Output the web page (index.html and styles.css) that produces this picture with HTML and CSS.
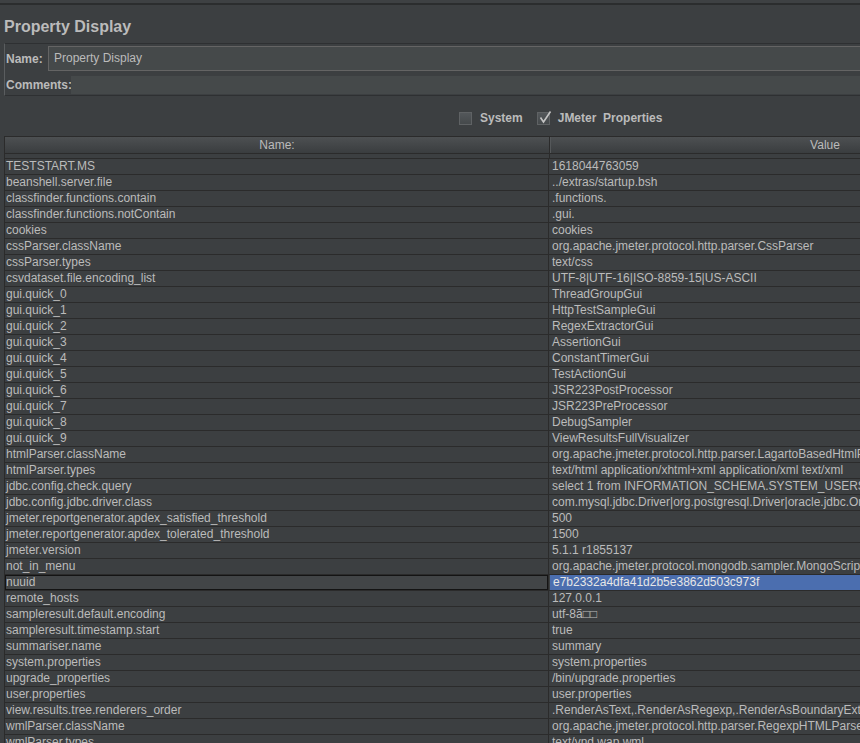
FILE: index.html
```html
<!DOCTYPE html>
<html>
<head>
<meta charset="utf-8">
<title>Property Display</title>
<link rel="stylesheet" href="styles.css">
</head>
<body>
<div class="topbar"></div>
<div class="content">
  <h1 class="title">Property Display</h1>
  <div class="panel">
    <div class="field-row">
      <span class="label name-label">Name:</span>
      <div class="textfield">Property Display</div>
    </div>
    <div class="field-row comments-row">
      <span class="label comments-label">Comments:</span>
      <div class="commentfield"></div>
    </div>
  </div>
  <div class="checks">
    <span class="cb"></span>
    <span class="cb-label">System</span>
    <span class="cb checked"><svg width="16" height="16" viewBox="0 0 16 16"><path d="M3.5 7.5 L6.5 12 L13.5 1.5" fill="none" stroke="#c4c4c4" stroke-width="1.6"/></svg></span>
    <span class="cb-label">JMeter&nbsp; Properties</span>
  </div>
  <div class="table">
    <div class="thead">
      <div class="th th-name">Name:</div>
      <div class="th th-value">Value</div>
    </div>
    <div class="spacer"><div class="sp-k"></div><div class="sp-v"></div></div>
    <div class="row"><div class="k">TESTSTART.MS</div><div class="v">1618044763059</div></div>
    <div class="row"><div class="k">beanshell.server.file</div><div class="v">../extras/startup.bsh</div></div>
    <div class="row"><div class="k">classfinder.functions.contain</div><div class="v">.functions.</div></div>
    <div class="row"><div class="k">classfinder.functions.notContain</div><div class="v">.gui.</div></div>
    <div class="row"><div class="k">cookies</div><div class="v">cookies</div></div>
    <div class="row"><div class="k">cssParser.className</div><div class="v">org.apache.jmeter.protocol.http.parser.CssParser</div></div>
    <div class="row"><div class="k">cssParser.types</div><div class="v">text/css</div></div>
    <div class="row"><div class="k">csvdataset.file.encoding_list</div><div class="v">UTF-8|UTF-16|ISO-8859-15|US-ASCII</div></div>
    <div class="row"><div class="k">gui.quick_0</div><div class="v">ThreadGroupGui</div></div>
    <div class="row"><div class="k">gui.quick_1</div><div class="v">HttpTestSampleGui</div></div>
    <div class="row"><div class="k">gui.quick_2</div><div class="v">RegexExtractorGui</div></div>
    <div class="row"><div class="k">gui.quick_3</div><div class="v">AssertionGui</div></div>
    <div class="row"><div class="k">gui.quick_4</div><div class="v">ConstantTimerGui</div></div>
    <div class="row"><div class="k">gui.quick_5</div><div class="v">TestActionGui</div></div>
    <div class="row"><div class="k">gui.quick_6</div><div class="v">JSR223PostProcessor</div></div>
    <div class="row"><div class="k">gui.quick_7</div><div class="v">JSR223PreProcessor</div></div>
    <div class="row"><div class="k">gui.quick_8</div><div class="v">DebugSampler</div></div>
    <div class="row"><div class="k">gui.quick_9</div><div class="v">ViewResultsFullVisualizer</div></div>
    <div class="row"><div class="k">htmlParser.className</div><div class="v">org.apache.jmeter.protocol.http.parser.LagartoBasedHtmlParser</div></div>
    <div class="row"><div class="k">htmlParser.types</div><div class="v">text/html application/xhtml+xml application/xml text/xml</div></div>
    <div class="row"><div class="k">jdbc.config.check.query</div><div class="v">select 1 from INFORMATION_SCHEMA.SYSTEM_USERS</div></div>
    <div class="row"><div class="k">jdbc.config.jdbc.driver.class</div><div class="v">com.mysql.jdbc.Driver|org.postgresql.Driver|oracle.jdbc.OracleDriver</div></div>
    <div class="row"><div class="k">jmeter.reportgenerator.apdex_satisfied_threshold</div><div class="v">500</div></div>
    <div class="row"><div class="k">jmeter.reportgenerator.apdex_tolerated_threshold</div><div class="v">1500</div></div>
    <div class="row"><div class="k">jmeter.version</div><div class="v">5.1.1 r1855137</div></div>
    <div class="row"><div class="k">not_in_menu</div><div class="v">org.apache.jmeter.protocol.mongodb.sampler.MongoScriptSampler</div></div>
    <div class="row sel"><div class="k">nuuid</div><div class="v">e7b2332a4dfa41d2b5e3862d503c973f</div></div>
    <div class="row"><div class="k">remote_hosts</div><div class="v">127.0.0.1</div></div>
    <div class="row"><div class="k">sampleresult.default.encoding</div><div class="v">utf-8ã□□</div></div>
    <div class="row"><div class="k">sampleresult.timestamp.start</div><div class="v">true</div></div>
    <div class="row"><div class="k">summariser.name</div><div class="v">summary</div></div>
    <div class="row"><div class="k">system.properties</div><div class="v">system.properties</div></div>
    <div class="row"><div class="k">upgrade_properties</div><div class="v">/bin/upgrade.properties</div></div>
    <div class="row"><div class="k">user.properties</div><div class="v">user.properties</div></div>
    <div class="row"><div class="k">view.results.tree.renderers_order</div><div class="v">.RenderAsText,.RenderAsRegexp,.RenderAsBoundaryExtractor,.RenderAsCssJQuery</div></div>
    <div class="row"><div class="k">wmlParser.className</div><div class="v">org.apache.jmeter.protocol.http.parser.RegexpHTMLParser</div></div>
    <div class="row"><div class="k">wmlParser.types</div><div class="v">text/vnd.wap.wml</div></div>
  </div>
</div>
</body>
</html>
```
FILE: styles.css
```css
html, body {
  margin: 0;
  padding: 0;
  width: 860px;
  height: 743px;
  overflow: hidden;
  background: #3c3f41;
  color: #bbbbbb;
  font-family: "Liberation Sans", Arial, sans-serif;
  font-size: 12px;
}

.topbar {
  height: 3px;
  background: #3e4143;
  border-bottom: 2px solid #2b2d2e;
}

.content {
  margin-left: 4px;
  width: 1094px;
}

.title {
  margin: 12px 0 6px 0;
  height: 20px;
  line-height: 20px;
  font-size: 16px;
  font-weight: bold;
  color: #bbbbbb;
}

.panel {
  border-top: 1px solid #2e3032;
  border-bottom: 1px solid #2e3032;
  border-left: 1px solid #5a5d5f;
  padding: 2px 0 1px 0;
  display: flex;
  flex-direction: column;
  gap: 5px;
}

.field-row {
  display: flex;
  align-items: center;
}

.label {
  font-weight: bold;
  padding-left: 1px;
  box-sizing: border-box;
}

.name-label {
  width: 43px;
}

.comments-label {
  width: 66px;
}

.textfield {
  flex: 1;
  height: 25px;
  box-sizing: border-box;
  border: 1px solid #646464;
  background: #45494a;
  line-height: 23px;
  padding-left: 5px;
  color: #bbbbbb;
}

.commentfield {
  flex: 1;
  height: 18px;
  background: #45494a;
}

.checks {
  height: 40px;
  box-sizing: border-box;
  padding-top: 4px;
  padding-left: 455px;
  display: flex;
  align-items: center;
  font-weight: bold;
}

.cb {
  position: relative;
  width: 13px;
  height: 13px;
  box-sizing: border-box;
  border: 1px solid #5f6264;
  background: linear-gradient(#53575a, #45494b);
  flex: none;
}

.cb svg {
  position: absolute;
  left: -1px;
  top: -3px;
}

.cb-label {
  margin-left: 8px;
  margin-right: 14px;
}

.table {
  border-left: 1px solid #2b2b2b;
  width: 1094px;
}

.thead {
  display: flex;
  height: 18px;
  box-sizing: border-box;
  border-top: 1px solid #2b2b2b;
  border-bottom: 1px solid #2b2b2b;
  background: linear-gradient(#4d5052, #3a3d3f);
}

.th {
  line-height: 16px;
  text-align: center;
  color: #bbbbbb;
}

.th-name {
  width: 544px;
  border-right: 1px solid #2b2b2b;
}

.th-value {
  width: 548px;
  border-left: 1px solid #55585a;
}

.spacer {
  display: flex;
  height: 4px;
}

.sp-k {
  width: 544px;
  border-right: 1px solid #2b2b2b;
}

.row {
  display: flex;
  height: 16px;
  box-sizing: border-box;
  border-top: 1px solid #2b2b2b;
  line-height: 15px;
  white-space: nowrap;
}

.k {
  width: 544px;
  box-sizing: border-box;
  padding-left: 1px;
  border-right: 1px solid #2b2b2b;
  overflow: hidden;
}

.v {
  width: 548px;
  padding-left: 3px;
  box-sizing: border-box;
  overflow: hidden;
}

.sel .k {
  background: #424547;
  box-shadow: inset 0 0 0 1px #141414;
}

.sel .v {
  background: #4b6eaf;
  color: #e6e6e6;
  margin-left: 1px;
  padding-left: 3px;
}
```
